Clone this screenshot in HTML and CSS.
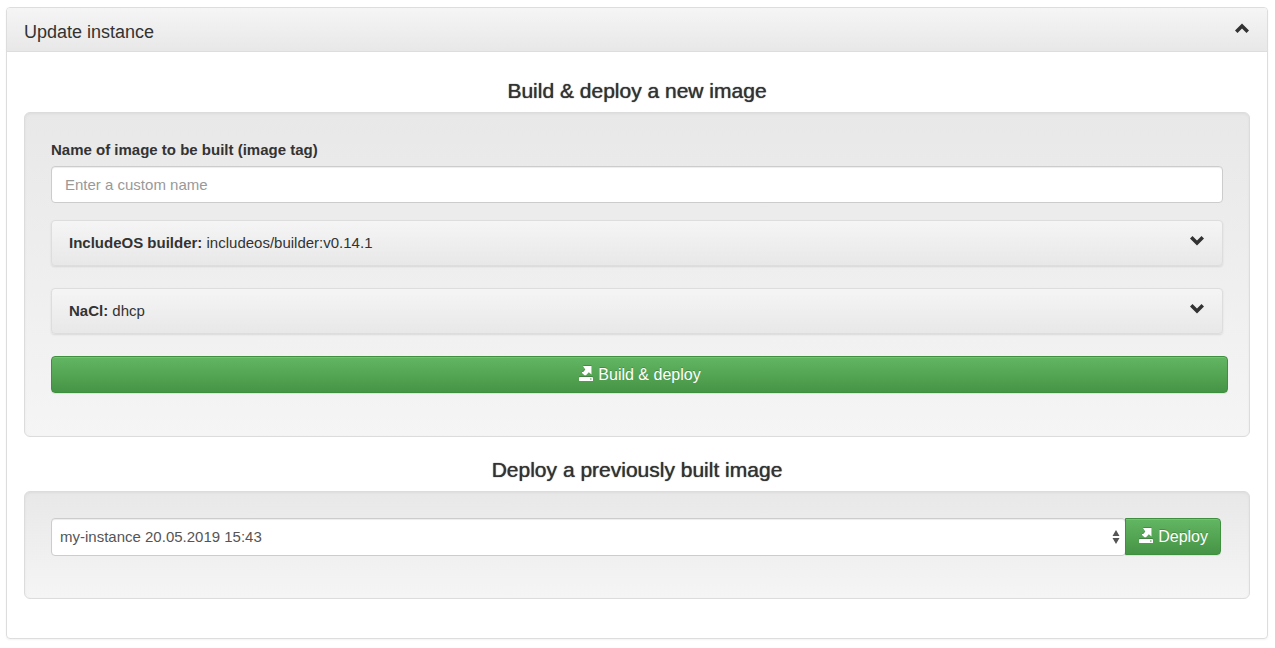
FILE: index.html
```html
<!DOCTYPE html>
<html lang="en">
<head>
<meta charset="utf-8">
<meta name="viewport" content="width=device-width, initial-scale=1">
<title>Update instance</title>
<link rel="stylesheet" href="styles.css">
</head>
<body>
<svg class="sprite" aria-hidden="true">
  <symbol id="chevron" viewBox="0 0 16 12"><path d="M8 10.500L1 3.500L3.500 1L8 5.500L12.500 1L15 3.500Z"/></symbol>
  <symbol id="open" viewBox="0 0 16 16"><path d="M5 0H13.500V8.500L10.800 6.200L8 9.300H6.500L4 7V6L5.500 5.800L7.300 3.500Z"/><path fill-rule="evenodd" d="M2 11H14Q15 11 15 12V14.500Q15 15 14.500 15H1.500Q1 15 1 14.500V12Q1 11 2 11ZM12 12.500V13.500H13.500V12.500Z"/></symbol>
</svg>
<main class="panel">
  <header class="panel-heading">
    <h1 class="panel-title">Update instance</h1>
    <button class="toggle" type="button" aria-label="Collapse"><svg class="chevron up"><use href="#chevron"/></svg></button>
  </header>
  <div class="panel-body">
    <h2 class="section-title">Build &amp; deploy a new image</h2>
    <form class="well">
      <label class="label" for="tag">Name of image to be built (image tag)</label>
      <input class="control" id="tag" type="text" placeholder="Enter a custom name">
      <button class="option" type="button"><span><b>IncludeOS builder:</b> includeos/builder:v0.14.1</span><svg class="chevron"><use href="#chevron"/></svg></button>
      <button class="option" type="button"><span><b>NaCl:</b> dhcp</span><svg class="chevron"><use href="#chevron"/></svg></button>
      <button class="btn btn-wide" type="button"><svg class="open"><use href="#open"/></svg>Build &amp; deploy</button>
    </form>
    <h2 class="section-title">Deploy a previously built image</h2>
    <form class="well group">
      <div class="select-wrap">
        <select class="control select" aria-label="Previously built image"><option>my-instance 20.05.2019 15:43</option></select>
        <svg class="arrows" viewBox="0 0 8 14" aria-hidden="true"><path d="M4 0L7.500 6H.5ZM4 14L.5 8H7.500Z"/></svg>
      </div>
      <button class="btn btn-addon" type="button"><svg class="open"><use href="#open"/></svg>Deploy</button>
    </form>
  </div>
</main>
</body>
</html>
```
FILE: styles.css
```css
* { box-sizing: border-box; }

body {
  margin: 0;
  padding: 7px 7px 8px 6px;
  background: #fff;
  color: #333;
  font: 15px/22px "Liberation Sans", Arial, sans-serif;
}

button, input, select { font: inherit; color: inherit; }
button { cursor: pointer; }
.sprite { display: none; }

.panel {
  border: 1px solid #ddd;
  border-radius: 4px;
  box-shadow: 0 1px 2px rgba(0, 0, 0, .05);
}

.panel-heading {
  display: flex;
  justify-content: space-between;
  align-items: flex-start;
  padding: 12px 17px 7px;
  border-bottom: 1px solid #ddd;
  border-radius: 3px 3px 0 0;
  background: linear-gradient(#f5f5f5, #e8e8e8);
}

.panel-title { margin: 0; font-size: 18px; font-weight: 400; line-height: 24px; }
.toggle { display: flex; padding: 2px 0 0; border: 0; background: none; }
.chevron { width: 16px; height: 12px; fill: #333; }
.up { transform: rotate(180deg); }
.panel-body { padding: 6px 17px 39px; }

.section-title {
  margin: 22px 0 10px;
  font-size: 21px;
  font-weight: 400;
  line-height: 22px;
  text-align: center;
  text-shadow: 0 0 1px #333;
}

.well {
  padding: 26px 26px 43px;
  border: 1px solid #dcdcdc;
  border-radius: 6px;
  background: linear-gradient(#e8e8e8, #f5f5f5);
  box-shadow: inset 0 1px 3px rgba(0, 0, 0, .05), 0 1px 0 rgba(255, 255, 255, .1);
}

.label { display: block; margin-bottom: 5px; font-weight: 700; }

.control {
  display: block;
  width: 100%;
  height: 37px;
  padding: 6px 13px;
  border: 1px solid #ccc;
  border-radius: 4px;
  background: #fff;
  box-shadow: inset 0 1px 1px rgba(0, 0, 0, .075);
  color: #555;
}

.control::placeholder { color: #999; opacity: 1; }

.option {
  display: flex;
  justify-content: space-between;
  width: 100%;
  height: 46px;
  margin-top: 22px;
  padding: 11px 17px;
  border: 1px solid #ddd;
  border-radius: 4px;
  background: linear-gradient(#f5f5f5, #e8e8e8);
  box-shadow: 0 1px 2px rgba(0, 0, 0, .1);
  text-align: left;
}

.control + .option { margin-top: 17px; }
.option .chevron { margin-top: 3px; }

.btn {
  display: flex;
  align-items: center;
  justify-content: center;
  gap: 4px;
  height: 37px;
  padding: 0 12px;
  border: 1px solid #3e8f3e;
  border-radius: 4px;
  background: linear-gradient(#62b662, #469446);
  box-shadow: inset 0 1px 0 rgba(255, 255, 255, .15), 0 1px 1px rgba(0, 0, 0, .075);
  color: #fff;
  font-size: 16px;
  text-shadow: 0 -1px 0 rgba(0, 0, 0, .2);
}

.btn-wide { width: calc(100% + 5px); margin-top: 22px; }
.btn-addon { z-index: 1; flex: none; margin-left: -1px; border-radius: 0 4px 4px 0; }
.open { width: 16px; height: 16px; margin-bottom: 1px; fill: #fff; filter: drop-shadow(0 -1px 0 rgba(0, 0, 0, .2)); }

.group { display: flex; padding: 26px 28px 42px 26px; }
.select-wrap { position: relative; flex: 1; }
.select { height: 38px; padding: 0 24px 0 8px; appearance: none; font-size: 15px; }
.arrows { position: absolute; top: 12px; right: 6px; width: 8px; height: 14px; fill: #555; pointer-events: none; }
```
